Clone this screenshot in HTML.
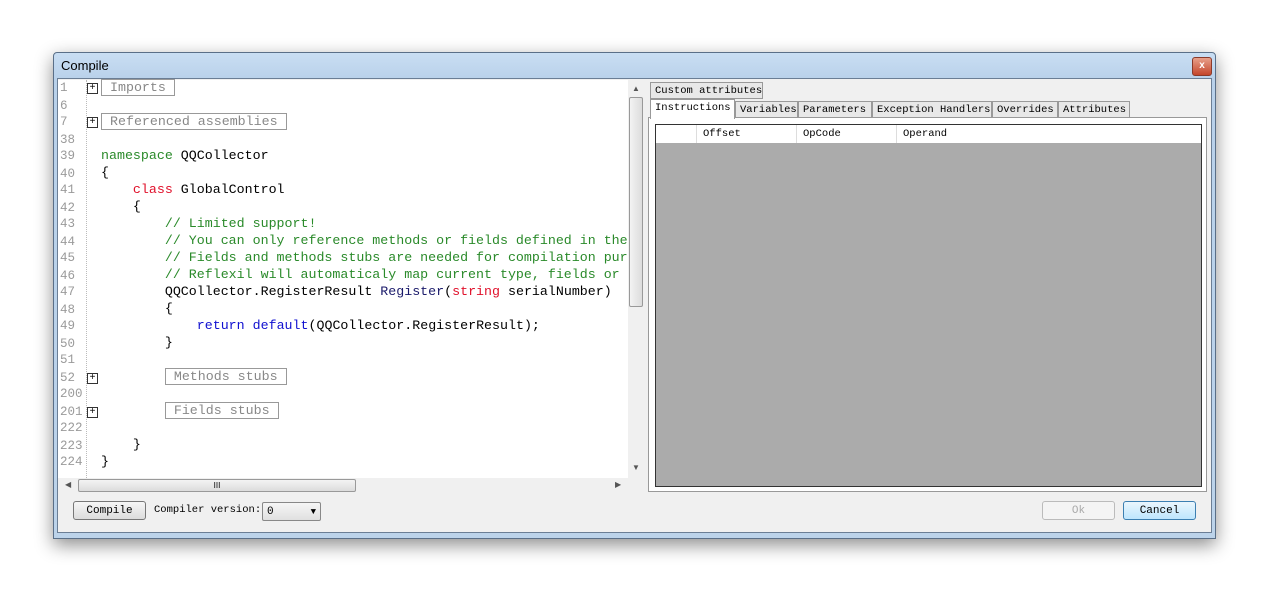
<!DOCTYPE html>
<html><head><style>
body{margin:0;width:1269px;height:590px;background:#fff;position:relative;overflow:hidden;font-family:"Liberation Sans",sans-serif}
.abs{position:absolute}
.win{left:53px;top:52px;width:1161px;height:485px;background:linear-gradient(180deg,#c9def3 0,#b9d1ea 26px,#bcd3ea 100%);border:1px solid #5a6f88;box-shadow:0 6px 18px rgba(0,0,0,.45);border-radius:4px 4px 0 0}
.client{left:57px;top:78px;width:1153px;height:453px;background:#f0f0f0;border:1px solid #6b7e95}
.code{left:58px;top:80px;width:570px;height:398px;background:#fff;font-family:"Liberation Mono",monospace;font-size:13.3px;color:#000}
.ln{position:absolute;left:2px;color:#9a9a9a;width:26px;font-size:12.5px}
.tx{position:absolute;left:43px;white-space:pre}
.g{color:#2a8a2a}.r{color:#e0102a}.b{color:#1010d0}.nv{color:#1a1a6a}
.box{border:1px solid #999;color:#888;padding:0 8px;line-height:14px}
.pl{position:absolute;left:29px;width:9px;height:9px;border:1px solid #333;font-size:10px;line-height:9px;text-align:center}
.tab{position:absolute;height:17px;border:1px solid #999;background:#e8e8e8;font-family:"Liberation Mono",monospace;font-size:10.5px;line-height:17px;padding:0 4px;box-sizing:border-box;white-space:nowrap;overflow:hidden}
.btn{position:absolute;height:19px;border:1px solid #777;border-radius:3px;background:linear-gradient(#f6f6f6,#dcdcdc);font-family:"Liberation Mono",monospace;font-size:11px;text-align:center;line-height:18px;box-sizing:border-box}
</style></head><body>
<div class="abs win"></div>
<div class="abs" style="left:61px;top:58px;font-size:13px;color:#000">Compile</div>
<div class="abs" style="left:1192px;top:57px;width:18px;height:17px;background:linear-gradient(#e8a08a,#c4462c);border:1px solid #8a3a2a;border-radius:3px;color:#fff;font-size:10px;text-align:center;line-height:16px;font-weight:bold">x</div>
<div class="abs client"></div>
<div class="abs code">
<div class="abs" style="left:28px;top:0;height:398px;border-left:1px dotted #bbb"></div>
</div>
<div class="abs" style="left:58px;top:80px;width:570px;height:398px;font-family:'Liberation Mono',monospace;font-size:13.3px">
<div class="ln" style="top:1px">1</div><div class="pl" style="top:3px">+</div><div class="tx" style="top:0"><span class="box">Imports</span></div>
<div class="ln" style="top:19px">6</div>
<div class="ln" style="top:35px">7</div><div class="pl" style="top:37px">+</div><div class="tx" style="top:34px"><span class="box">Referenced assemblies</span></div>
<div class="ln" style="top:53px">38</div>
<div class="ln" style="top:69px">39</div><div class="tx" style="top:68px"><span class="g">namespace</span> QQCollector</div>
<div class="ln" style="top:87px">40</div><div class="tx" style="top:85px">{</div>
<div class="ln" style="top:103px">41</div><div class="tx" style="top:102px">    <span class="r">class</span> GlobalControl</div>
<div class="ln" style="top:121px">42</div><div class="tx" style="top:119px">    {</div>
<div class="ln" style="top:137px">43</div><div class="tx g" style="top:136px">        // Limited support!</div>
<div class="ln" style="top:155px">44</div><div class="tx g" style="top:153px">        // You can only reference methods or fields defined in the</div>
<div class="ln" style="top:171px">45</div><div class="tx g" style="top:170px">        // Fields and methods stubs are needed for compilation pur</div>
<div class="ln" style="top:189px">46</div><div class="tx g" style="top:187px">        // Reflexil will automaticaly map current type, fields or </div>
<div class="ln" style="top:205px">47</div><div class="tx" style="top:204px">        QQCollector.RegisterResult <span class="nv">Register</span>(<span class="r">string</span> serialNumber)</div>
<div class="ln" style="top:223px">48</div><div class="tx" style="top:221px">        {</div>
<div class="ln" style="top:239px">49</div><div class="tx" style="top:238px">            <span class="b">return</span> <span class="b">default</span>(QQCollector.RegisterResult);</div>
<div class="ln" style="top:257px">50</div><div class="tx" style="top:255px">        }</div>
<div class="ln" style="top:273px">51</div>
<div class="ln" style="top:291px">52</div><div class="pl" style="top:293px">+</div><div class="tx" style="top:289px">        <span class="box">Methods stubs</span></div>
<div class="ln" style="top:307px">200</div>
<div class="ln" style="top:325px">201</div><div class="pl" style="top:327px">+</div><div class="tx" style="top:323px">        <span class="box">Fields stubs</span></div>
<div class="ln" style="top:341px">222</div>
<div class="ln" style="top:359px">223</div><div class="tx" style="top:357px">    }</div>
<div class="ln" style="top:375px">224</div><div class="tx" style="top:374px">}</div>
</div>
<div class="abs" style="left:628px;top:80px;width:16px;height:396px;background:#f0f0f0"></div>
<div class="abs" style="left:629px;top:97px;width:14px;height:210px;background:linear-gradient(90deg,#f3f3f3,#dcdcdc);border:1px solid #999;border-radius:2px;box-sizing:border-box"></div>
<div class="abs" style="left:632px;top:84px;font-size:8px;color:#555">▲</div>
<div class="abs" style="left:632px;top:463px;font-size:8px;color:#555">▼</div>
<div class="abs" style="left:58px;top:478px;width:570px;height:15px;background:#f0f0f0"></div>
<div class="abs" style="left:78px;top:479px;width:278px;height:13px;background:linear-gradient(#f3f3f3,#dcdcdc);border:1px solid #999;border-radius:2px;box-sizing:border-box;font-size:8px;text-align:center;line-height:12px">III</div>
<div class="abs" style="left:65px;top:480px;font-size:8px;color:#555">◀</div>
<div class="abs" style="left:615px;top:480px;font-size:8px;color:#555">▶</div>
<div class="abs" style="left:648px;top:117px;width:559px;height:375px;background:#fff;border:1px solid #999;box-sizing:border-box"></div>
<div class="tab" style="left:650px;top:82px;width:113px">Custom attributes</div>
<div class="tab" style="left:650px;top:99px;width:85px;height:20px;background:#fff;border-bottom:none">Instructions</div>
<div class="tab" style="left:735px;top:101px;width:63px">Variables</div>
<div class="tab" style="left:798px;top:101px;width:74px">Parameters</div>
<div class="tab" style="left:872px;top:101px;width:120px">Exception Handlers</div>
<div class="tab" style="left:992px;top:101px;width:66px">Overrides</div>
<div class="tab" style="left:1058px;top:101px;width:72px">Attributes</div>
<div class="abs" style="left:655px;top:124px;width:547px;height:363px;background:#ababab;border:1px solid #333;box-sizing:border-box"></div>
<div class="abs" style="left:656px;top:125px;width:545px;height:18px;background:#fff;font-family:'Liberation Mono',monospace;font-size:10.5px;line-height:18px">
<div class="abs" style="left:40px;top:0;height:18px;border-left:1px solid #ddd;padding-left:6px">Offset</div>
<div class="abs" style="left:140px;top:0;height:18px;border-left:1px solid #ddd;padding-left:6px">OpCode</div>
<div class="abs" style="left:240px;top:0;height:18px;border-left:1px solid #ddd;padding-left:6px">Operand</div>
</div>
<div class="btn" style="left:73px;top:501px;width:73px">Compile</div>
<div class="abs" style="left:154px;top:504px;font-family:'Liberation Mono',monospace;font-size:10.5px;white-space:nowrap">Compiler version:</div>
<div class="abs" style="left:262px;top:502px;width:59px;height:19px;border:1px solid #888;border-radius:2px;background:linear-gradient(#f6f6f6,#e0e0e0);box-sizing:border-box;font-family:'Liberation Mono',monospace;font-size:11px;line-height:18px;padding-left:4px">0<span style="position:absolute;right:4px;font-size:9px">▼</span></div>
<div class="btn" style="left:1042px;top:501px;width:73px;color:#aaa;border-color:#bbb;background:#f4f4f4">Ok</div>
<div class="btn" style="left:1123px;top:501px;width:73px;border-color:#3c7fb1;background:linear-gradient(#eaf6fd,#bee6fd)">Cancel</div>
</body></html>
